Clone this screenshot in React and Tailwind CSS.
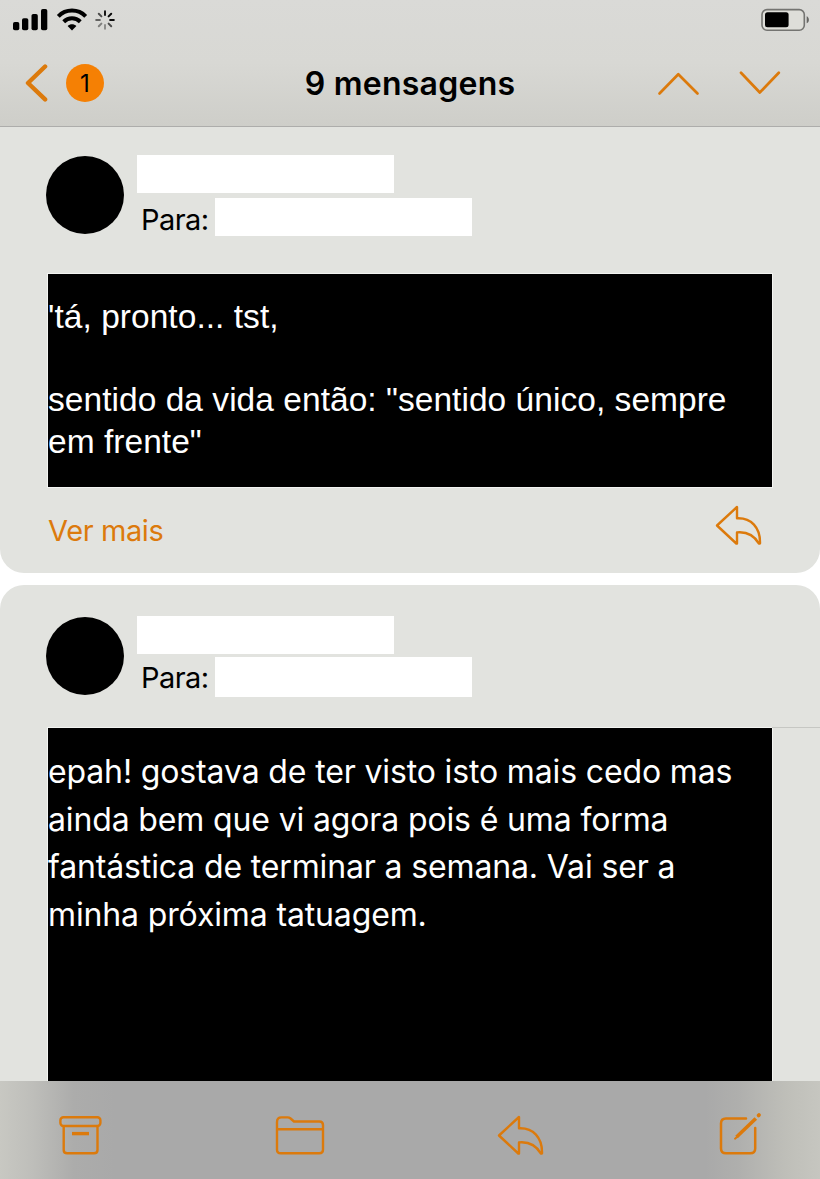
import React from "react";

const stroke = {
  fill: "none",
  stroke: "#dc7a0c",
  strokeLinecap: "round",
  strokeLinejoin: "round",
};

function Signal() {
  return (
    <svg className="h-6 w-9" viewBox="12 8 36 24">
      <rect x="13" y="22" width="6.3" height="8.3" rx="1.8" />
      <rect x="22" y="18.3" width="6.3" height="12" rx="1.8" />
      <rect x="31.5" y="14" width="6.3" height="16.3" rx="1.8" />
      <rect x="41" y="9" width="6.3" height="21.3" rx="1.8" />
    </svg>
  );
}

function Wifi() {
  return (
    <svg className="ml-2 h-6 w-8" viewBox="56 8 32 24">
      <g fill="none" stroke="#000" strokeWidth="4">
        <path d="M58.3 16.3C65.8 8.6 78.2 8.6 85.7 16.3" />
        <path d="M63.7 21.7C68.4 17.1 75.6 17.1 80.3 21.7" />
      </g>
      <path d="M67.6 25.9C70 23.6 74 23.6 76.4 25.9L72 30.4Z" />
    </svg>
  );
}

const spokes = [0.9, 0.95, 0.95, 0.65, 0.35, 0.42, 0.55, 0.65];

function Spinner() {
  return (
    <svg className="ml-[5px] h-6 w-6" viewBox="93 7.7 24 24">
      {spokes.map((o, i) => (
        <path
          key={i}
          d="M105 14.6V10.9"
          stroke="#000"
          strokeOpacity={o}
          strokeWidth="2"
          strokeLinecap="round"
          transform={`rotate(${i * 45} 105 19.7)`}
        />
      ))}
    </svg>
  );
}

function Battery() {
  return (
    <svg className="h-6 w-[50px]" viewBox="760 8 50 24">
      <rect x="762" y="9.6" width="42.3" height="20.6" rx="5" fill="#deded9" stroke="#747471" strokeWidth="1.6" />
      <rect x="765" y="12.2" width="23.6" height="15" rx="2.5" />
      <path d="M806.7 16.2C809.6 17.3 809.6 22.3 806.7 23.3Z" fill="#666663" />
    </svg>
  );
}

function Reply() {
  return (
    <svg className="h-[42px] w-12 shrink-0" viewBox="0 -1 48 42" {...stroke} strokeWidth="2.4">
      <path d="M2 20.5L22 2V13.3C36 12.6 45.5 22.5 45 38.5H43.8C39.5 31 33 26.4 22 27.4V38.5H21.3Z" />
    </svg>
  );
}

function Archive() {
  return (
    <svg className="h-11 w-[46px]" viewBox="58 1113 46 44" {...stroke} strokeWidth="2.4">
      <rect x="60.4" y="1117.2" width="40" height="8.8" rx="3" />
      <path d="M63.7 1126.3V1150Q63.7 1153.3 67.2 1153.3H94Q97.5 1153.3 97.5 1150V1126.3" />
      <path d="M72 1133.6H89" strokeLinecap="butt" strokeWidth="3.4" />
    </svg>
  );
}

function Folder() {
  return (
    <svg className="h-11 w-[52px]" viewBox="275 1113 52 44" {...stroke} strokeWidth="2.4">
      <path d="M277 1122Q277 1117.4 281.5 1117.4H287.5Q289.2 1117.4 290.6 1118.5L294 1121.5H319.3Q323 1121.5 323 1125V1149.8Q323 1153.3 319.3 1153.3H280.8Q277 1153.3 277 1149.8ZM277 1129.3H323" />
    </svg>
  );
}

function Compose() {
  return (
    <svg className="h-12 w-12" viewBox="716 1111 48 48" {...stroke} strokeWidth="2.5">
      <path d="M746 1118.6H726Q721 1118.6 721 1123.6V1148.5Q721 1153.3 726 1153.3H750.2Q755.2 1153.3 755.2 1148.5V1128" />
      <path d="M736.5 1137L755.8 1118.5" strokeWidth="3.6" strokeLinecap="butt" />
      <path d="M735 1138.7L737.8 1136.2" strokeWidth="2" />
      <path d="M758.6 1115.4L759 1115" strokeWidth="3.8" />
    </svg>
  );
}

function Sender({ gap, label }) {
  return (
    <div className="flex pl-[46px]">
      <div className="mt-px size-[78px] rounded-full bg-black" />
      <div className={`ml-[13px] flex flex-col ${gap}`}>
        <div className="h-[38px] w-[257px] bg-white" />
        <div className="flex">
          <span className={`w-[78px] pl-1 text-[29px] leading-[38px] tracking-[-0.55px] whitespace-nowrap ${label}`}>Para:</span>
          <div className="w-[257px] bg-white" />
        </div>
      </div>
    </div>
  );
}

export default function App() {
  return (
    <div className="flex h-[1179px] w-[820px] flex-col overflow-hidden bg-white font-['Inter',sans-serif] text-black">
      <header className="flex h-[127px] shrink-0 flex-col border-b border-[#adadab] bg-linear-to-b from-[#dadad7] via-[#d8d8d4] to-[#cecec9]">
        <div className="flex h-10 items-center pr-[10px] pl-3">
          <Signal />
          <Wifi />
          <Spinner />
          <div className="ml-auto"><Battery /></div>
        </div>
        <div className="grid h-[86px] grid-cols-3 items-center">
          <div className="flex items-center pl-6">
            <svg className="h-10 w-6" viewBox="24 63 24 40" {...stroke} strokeWidth="4.4">
              <path d="M45.1 66.5L28 83L45.1 99.4" />
            </svg>
            <span className="ml-[18px] flex size-[38px] items-center justify-center rounded-full bg-[#f58004] pt-px text-[24px]">1</span>
          </div>
          <h1 className="pt-0.5 text-center text-[32px] font-semibold tracking-[0.25px] whitespace-nowrap">9 mensagens</h1>
          <div className="flex items-center justify-end gap-[38px] pr-[38px]">
            <svg className="h-8 w-11" viewBox="656 67 44 32" {...stroke} strokeWidth="2.7">
              <path d="M659.5 93.5L678.3 74.3L697.5 93.5" />
            </svg>
            <svg className="h-8 w-11" viewBox="738 67 44 32" {...stroke} strokeWidth="2.7">
              <path d="M741 72.8L759.8 92.5L778.8 72.8" />
            </svg>
          </div>
        </div>
      </header>

      <main className="flex h-[954px] shrink-0 flex-col gap-3">
        <article className="flex h-[446px] shrink-0 flex-col rounded-b-[24px] bg-[#e2e3df] pt-7">
          <Sender gap="gap-[5px]" label="h-[38px] pt-[3px]" />
          <div className="mx-12 mt-[38px] h-[213px] shrink-0 bg-black pt-[22px] font-['Liberation_Sans',sans-serif] text-[33.5px] leading-[41.5px] tracking-[0.04px] whitespace-nowrap text-white outline outline-white/60">
            <p>'tá, pronto... tst,</p>
            <p className="mt-[41.5px]">sentido da vida então: "sentido único, sempre</p>
            <p>em frente"</p>
          </div>
          <div className="flex items-start justify-between pt-[17px] pr-[57px] pl-12">
            <span className="pt-[5px] text-[29px] tracking-[-0.4px] text-[#dc7a0c]">Ver mais</span>
            <Reply />
          </div>
        </article>

        <article className="flex h-[496px] shrink-0 flex-col rounded-t-[24px] bg-[#e2e3df] pt-[31px]">
          <Sender gap="gap-[3px]" label="h-10 pt-[2px]" />
          <div className="mt-[30px] flex pt-px pl-12">
            <div className="h-[354px] w-[724px] shrink-0 bg-black pt-5 text-[32px] leading-[47.5px] tracking-[-0.14px] whitespace-nowrap text-white outline outline-white/60">
              <p>epah! gostava de ter visto isto mais cedo mas</p>
              <p>ainda bem que vi agora pois é uma forma</p>
              <p>fantástica de terminar a semana. Vai ser a</p>
              <p>minha próxima tatuagem.</p>
            </div>
            <div className="-mt-px h-px flex-1 bg-[#c6c7c3]" />
          </div>
        </article>
      </main>

      <footer className="flex h-[98px] shrink-0 items-center justify-between bg-[linear-gradient(90deg,#c8c8c2_0%,#bebeba_4%,#acacab_9%,#a9a9a9_14%,#a9a9a9_86%,#afafad_90%,#bfbfb9_96%,#c6c6c0_100%)] pt-2.5 pr-[56px] pl-[58px]">
        <Archive />
        <Folder />
        <Reply />
        <Compose />
      </footer>
    </div>
  );
}
